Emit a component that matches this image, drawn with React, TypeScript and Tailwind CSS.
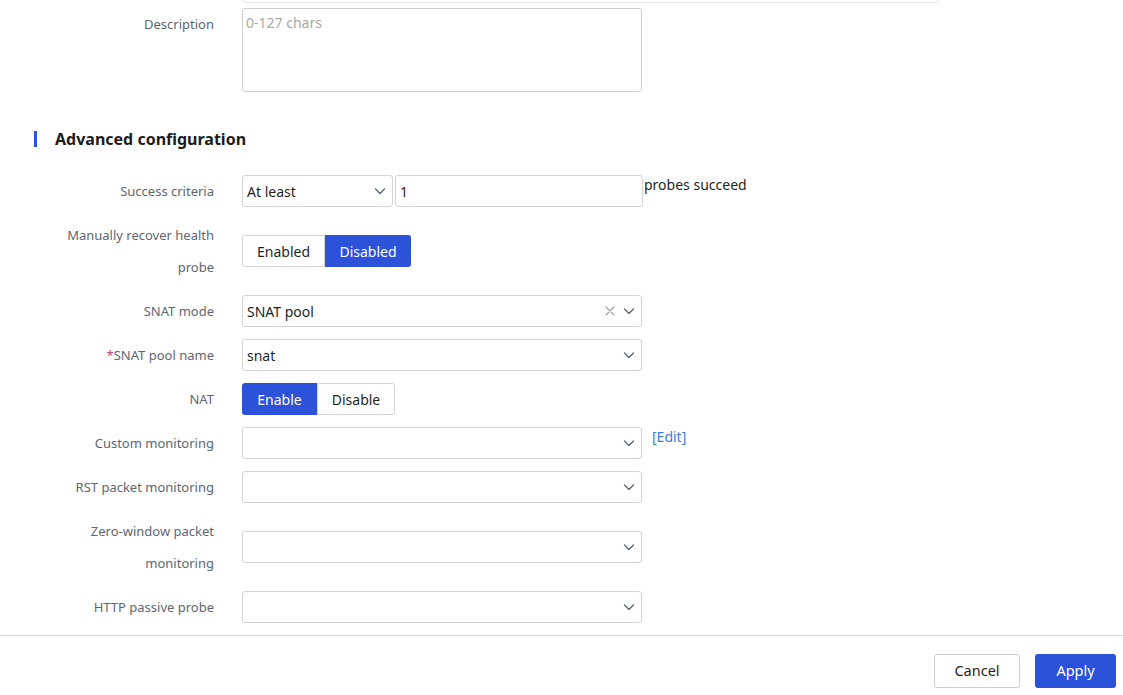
import React from "react";

const Chevron = () => (
  <svg width="14" height="14" viewBox="0 0 14 14" fill="none" className="shrink-0">
    <path d="M2.5 5l4.5 4.5L11.5 5" stroke="#5a6472" strokeWidth="1.3" strokeLinecap="round" strokeLinejoin="round" />
  </svg>
);

const Cross = () => (
  <svg width="12" height="12" viewBox="0 0 12 12" fill="none" className="shrink-0">
    <path d="M2 2l8 8M10 2l-8 8" stroke="#9aa0a8" strokeWidth="1.1" strokeLinecap="round" />
  </svg>
);

function Label({ children }: { children: React.ReactNode }) {
  return (
    <div className="w-[214px] shrink-0 pl-[48px] text-right text-[13px] text-[#5f6670] leading-[32px]">
      {children}
    </div>
  );
}

function Select({ value, clear, className }: { value?: string; clear?: boolean; className?: string }) {
  return (
    <div className={"h-[32px] rounded-[3px] border border-[#d4d4d4] bg-white flex items-center pl-[4px] pr-[5px] " + (className ?? "w-[400px]")}>
      <span className="flex-1 text-[14px] text-[#1f1f1f]">{value}</span>
      {clear && <span className="mr-[6px] flex items-center"><Cross /></span>}
      <Chevron />
    </div>
  );
}

function Row({ label, children }: { label: React.ReactNode; children: React.ReactNode }) {
  return (
    <div className="flex items-center gap-[28px]">
      <Label>{label}</Label>
      <div className="flex items-center">{children}</div>
    </div>
  );
}

export default function App() {
  return (
    <div className="w-[1123px] h-[695px] overflow-hidden bg-white relative" style={{ fontFamily: '"Noto Sans", "Open Sans", sans-serif' }}>
      <div className="absolute left-[242px] top-[-30px] w-[698px] h-[33px] rounded-[4px] border border-[#e6e6e6]" />
      <div className="pt-[8px]">
        <div className="flex items-start gap-[28px]">
          <div className="w-[214px] shrink-0 text-right text-[13px] text-[#5f6670] leading-[32px]">Description</div>
          <div className="w-[400px] h-[84px] rounded-[3px] border border-[#cfcfcf] px-[3px] py-[2px] text-[14px] text-[#a8a8a8] leading-[24px]">0-127 chars</div>
        </div>

        <div className="mt-[39px] flex items-center h-[16px]">
          <div className="ml-[34px] w-[3px] h-[16px] bg-[#2b52d8]" />
          <div className="ml-[18px] text-[16px] font-bold text-[#1c1c1c] leading-[16px]">Advanced configuration</div>
        </div>

        <div className="mt-[28px] flex flex-col gap-[12px]">
          <Row label="Success criteria">
            <Select value="At least" className="w-[151px]" />
            <div className="ml-[2px] w-[248px] h-[32px] rounded-[3px] border border-[#d4d4d4] flex items-center pl-[4px] text-[14px] text-[#3a1a10]">1</div>
            <div className="self-start ml-[1px] text-[14px] leading-[20px] text-[#1f1f1f]">probes succeed</div>
          </Row>

          <Row label="Manually recover health probe">
            <div className="flex h-[32px] text-[14px]">
              <div className="w-[83px] flex items-center justify-center rounded-l-[3px] border border-[#d4d4d4] text-[#1f1f1f]">Enabled</div>
              <div className="w-[86px] flex items-center justify-center rounded-r-[3px] bg-[#2b52d8] text-white">Disabled</div>
            </div>
          </Row>

          <Row label="SNAT mode">
            <Select value="SNAT pool" clear />
          </Row>

          <Row label={<><span className="text-[#c0407a]">*</span>SNAT pool name</>}>
            <Select value="snat" />
          </Row>

          <Row label="NAT">
            <div className="flex h-[32px] text-[14px]">
              <div className="w-[75px] flex items-center justify-center rounded-l-[3px] bg-[#2b52d8] text-white">Enable</div>
              <div className="w-[78px] flex items-center justify-center rounded-r-[3px] border border-[#d4d4d4] text-[#1f1f1f]">Disable</div>
            </div>
          </Row>

          <Row label="Custom monitoring">
            <Select />
            <div className="self-start ml-[10px] text-[14px] leading-[20px] text-[#3b7de0]">[Edit]</div>
          </Row>

          <Row label="RST packet monitoring">
            <Select />
          </Row>

          <Row label="Zero-window packet monitoring">
            <Select />
          </Row>

          <Row label="HTTP passive probe">
            <Select />
          </Row>
        </div>
      </div>

      <div className="absolute left-0 right-0 top-[635px] border-t border-[#d8d8d8]" />
      <div className="absolute left-0 right-0 top-[654px] flex justify-end gap-[15px] pr-[7px]">
        <div className="w-[86px] h-[34px] rounded-[3px] border border-[#cfcfcf] flex items-center justify-center text-[14.5px] text-[#1f1f1f]">Cancel</div>
        <div className="w-[81px] h-[34px] rounded-[3px] bg-[#2b52d8] flex items-center justify-center text-[14.5px] text-white">Apply</div>
      </div>
    </div>
  );
}
